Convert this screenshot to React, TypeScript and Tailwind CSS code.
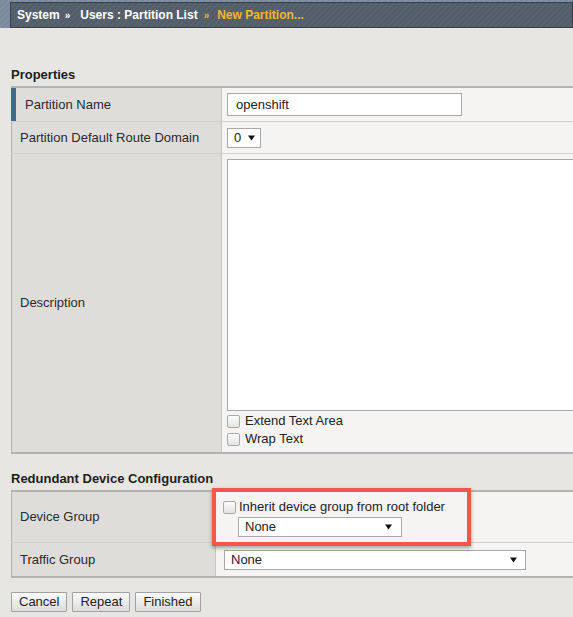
const FONT = "font-['Liberation_Sans',Arial,sans-serif]"

function Arrow() {
  return (
    <svg width="7" height="6" viewBox="0 0 7 6">
      <path d="M0 0.5 L7 0.5 L3.5 5.5 Z" fill="#111" />
    </svg>
  )
}

function Checkbox() {
  return (
    <span className="inline-block w-[13px] h-[13px] rounded-[2px] border border-[#a9a9a9] bg-[linear-gradient(#fdfdfd,#e2e2e2)] shrink-0" />
  )
}

function Select({ value, width, pr = 8 }: { value: string; width: number; pr?: number }) {
  return (
    <div
      className="h-[20px] flex items-center justify-between bg-white border border-[#a9a9a9] pl-[6px] text-[13px] text-[#222]"
      style={{ width, paddingRight: pr }}
    >
      <span>{value}</span>
      <Arrow />
    </div>
  )
}

function Button({ label }: { label: string }) {
  return (
    <button className="h-[20px] px-[7px] text-[13px] leading-[16px] text-[#222] border border-[#a1a1a1] bg-[linear-gradient(#fafafa,#dcdcdc)] rounded-[1px]">
      {label}
    </button>
  )
}

export default function App() {
  return (
    <div className={`${FONT} w-[573px] h-[617px] overflow-hidden bg-[#e8e6e2] relative`}>
      {/* Breadcrumb bar */}
      <div className="h-[28px] pt-[2px] pl-[10px] bg-[repeating-linear-gradient(135deg,#7a899b_0px,#7a899b_2px,#8290a1_2px,#8290a1_4px)]">
        <div className="h-[26px] flex items-center pl-[6px] border border-[#394049] bg-[repeating-linear-gradient(135deg,#525d6a_0px,#525d6a_2px,#58636f_2px,#58636f_4px)] text-[12px] font-bold whitespace-nowrap">
          <span className="text-white">System</span>
          <span className="text-white text-[10px] ml-[5px] mr-[10px]">»</span>
          <span className="text-white">Users : Partition List</span>
          <span className="text-[#f5b52c] text-[10px] ml-[6px] mr-[8px]">»</span>
          <span className="text-[#f5b52c]">New Partition...</span>
        </div>
      </div>

      <div className="pl-[11px]">
        {/* Properties */}
        <div className="mt-[39px] h-[16px] leading-[16px] text-[13px] font-bold text-[#1e1e1e]">Properties</div>
        <div className="mt-[3px] w-[640px] border-t-2 border-b-2 border-[#b5b3b0] text-[13px] text-[#2a2a2a]">
          <div className="flex h-[34px] border-b border-[#d2d0cd]">
            <div className="w-[211px] shrink-0 border-l-[5px] border-r border-l-[#3d6997] border-r-[#c6c4c1] bg-[#dfddda] flex items-center pl-[9px]">
              Partition Name
            </div>
            <div className="flex-1 bg-[#f5f4f2] flex items-center pl-[5px]">
              <div className="w-[235px] h-[23px] bg-white border border-[#a9a9a9] flex items-center pl-[8px] text-[#222]">
                openshift
              </div>
            </div>
          </div>
          <div className="flex h-[32px] border-b border-[#d2d0cd]">
            <div className="w-[211px] shrink-0 border-l border-r border-l-[#b5b3b0] border-r-[#c6c4c1] bg-[#dfddda] flex items-center pl-[8px]">
              Partition Default Route Domain
            </div>
            <div className="flex-1 bg-[#f5f4f2] flex items-center pl-[5px]">
              <Select value="0" width={34} pr={5} />
            </div>
          </div>
          <div className="flex h-[298px]">
            <div className="w-[211px] shrink-0 border-l border-r border-l-[#b5b3b0] border-r-[#c6c4c1] bg-[#dfddda] flex items-center pl-[8px]">
              Description
            </div>
            <div className="flex-1 bg-[#f5f4f2] pl-[5px] pt-[5px]">
              <div className="h-[252px] bg-white border border-[#a9a9a9]" />
              <div className="flex items-center gap-[5px] h-[18px] mt-[1px] text-[#222]">
                <Checkbox />
                <span>Extend Text Area</span>
              </div>
              <div className="flex items-center gap-[5px] h-[18px] text-[#222]">
                <Checkbox />
                <span>Wrap Text</span>
              </div>
            </div>
          </div>
        </div>

        {/* Redundant Device Configuration */}
        <div className="mt-[17px] h-[16px] leading-[16px] text-[13px] font-bold text-[#1e1e1e]">
          Redundant Device Configuration
        </div>
        <div className="mt-[3px] w-[640px] border-t-2 border-b-2 border-[#b5b3b0] text-[13px] text-[#2a2a2a]">
          <div className="flex h-[51px] border-b border-[#d2d0cd]">
            <div className="w-[205px] shrink-0 border-l border-r border-l-[#b5b3b0] border-r-[#c6c4c1] bg-[#dfddda] flex items-center pl-[8px]">
              Device Group
            </div>
            <div className="flex-1 bg-[#f5f4f2] pl-[7px] pt-[8px]">
              <div className="flex items-center gap-[3px] h-[14px] text-[#222]">
                <Checkbox />
                <span>Inherit device group from root folder</span>
              </div>
              <div className="ml-[15px] mt-[3px]">
                <Select value="None" width={164} pr={9} />
              </div>
            </div>
          </div>
          <div className="flex h-[33px]">
            <div className="w-[205px] shrink-0 border-l border-r border-l-[#b5b3b0] border-r-[#c6c4c1] bg-[#dfddda] flex items-center pl-[8px]">
              Traffic Group
            </div>
            <div className="flex-1 bg-[#f5f4f2] flex items-center pl-[8px]">
              <Select value="None" width={302} pr={8} />
            </div>
          </div>
        </div>

        {/* Buttons */}
        <div className="mt-[14px] flex gap-[5px]">
          <Button label="Cancel" />
          <Button label="Repeat" />
          <Button label="Finished" />
        </div>
      </div>

      {/* Annotation box */}
      <div className="absolute left-[212px] top-[488px] w-[259px] h-[58px] border-4 border-[#f5554a] shadow-[0_2px_4px_rgba(0,0,0,0.35)]" />
    </div>
  )
}
